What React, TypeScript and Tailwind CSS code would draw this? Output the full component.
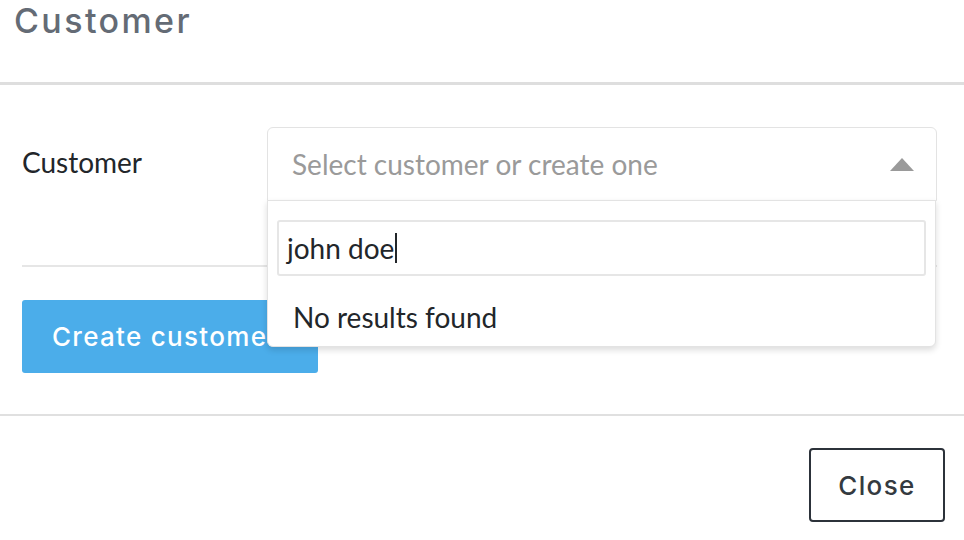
const lato = { fontFamily: 'Lato, "Noto Sans", sans-serif' };
const display = { fontFamily: 'Inter, "Open Sans", sans-serif' };

function CustomerSelect() {
  return (
    <div className="relative flex-1">
      <div
        className="flex h-[74px] items-center justify-between rounded-t-[6px] border border-[#e3e3e3] pl-[24px] pr-[22px]"
        style={lato}
      >
        <span className="text-[28px] leading-[34px] text-[#9a9a9a]">Select customer or create one</span>
        <svg width="24" height="13" viewBox="0 0 24 13" aria-hidden>
          <polygon points="0,13 12,0 24,13" fill="#9a9a9a" />
        </svg>
      </div>
      <div
        className="absolute left-0 right-[1px] top-full -mt-px rounded-b-[6px] border border-[#e3e3e3] bg-white shadow-[0_3px_6px_rgba(0,0,0,0.14)]"
        style={lato}
      >
        <div className="px-[9px] pt-[19px]">
          <div className="flex h-[56px] items-center rounded-[3px] border-2 border-[#e6e6e6] px-[8px] text-[28px] leading-[34px] text-[#22262a]">
            <span>john doe</span>
            <span className="ml-[1px] inline-block h-[30px] w-[1.5px] bg-[#22262a]" />
          </div>
        </div>
        <div className="px-[25px] pb-[14px] pt-[26px] text-[28px] leading-[30px] text-[#22262a]">
          No results found
        </div>
      </div>
    </div>
  );
}

export default function App() {
  return (
    <div className="relative h-[540px] w-[964px] overflow-hidden bg-white">
      <header className="h-[85px] border-b-[3px] border-[#dedede] px-[14px]">
        <h1
          className="pt-[1px] text-[34px] leading-[40px] font-medium tracking-[2.4px] text-[#646b75]"
          style={display}
        >
          Customer
        </h1>
      </header>

      <section className="pl-[22px] pr-[27px] pt-[42px] pb-[41px]">
        <div className="flex border-b-2 border-[#e6e6e6] pb-[64px]">
          <label
            className="w-[245px] pt-[18px] text-[28px] leading-[34px] text-[#22262a]"
            style={lato}
          >
            Customer
          </label>
          <CustomerSelect />
        </div>
        <button
          type="button"
          className="mt-[33px] flex h-[73px] w-[296px] items-center rounded-[3px] bg-[#4badea] pl-[30px] text-[26px] font-medium tracking-[1.3px] whitespace-nowrap text-white"
          style={display}
        >
          Create customer
        </button>
      </section>

      <footer className="flex justify-end border-t-2 border-[#e0e0e0] pr-[19px] pt-[32px]">
        <button
          type="button"
          className="h-[74px] w-[136px] rounded-[4px] border-2 border-[#2c323a] text-[26px] font-medium tracking-[1.4px] text-[#343a40]"
          style={display}
        >
          Close
        </button>
      </footer>
    </div>
  );
}
